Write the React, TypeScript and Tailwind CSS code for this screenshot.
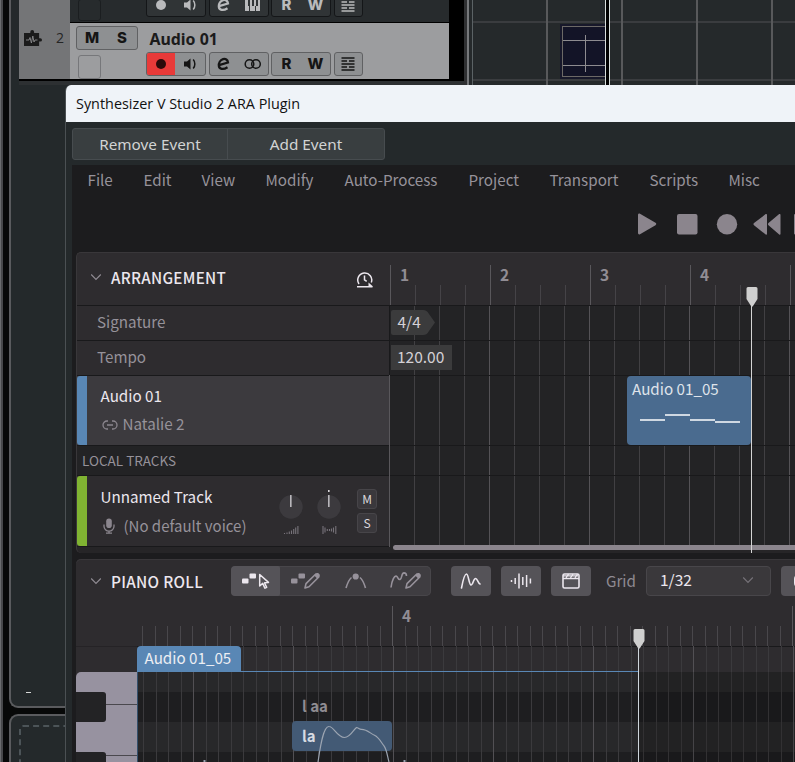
import type { ReactNode } from "react";

const menuItems = [
  { label: "File", width: "w-[56px]" },
  { label: "Edit", width: "w-[58px]" },
  { label: "View", width: "w-[64px]" },
  { label: "Modify", width: "w-[79px]" },
  { label: "Auto-Process", width: "w-[124px]" },
  { label: "Project", width: "w-[81px]" },
  { label: "Transport", width: "w-[100px]" },
  { label: "Scripts", width: "w-[79px]" },
  { label: "Misc", width: "w-[60px]" },
];

const range = (n: number) => Array.from({ length: n }, (_, i) => i);

/* ---------- host track list ---------- */

function HostGroup({ children, dark, className }: { children: ReactNode; dark?: boolean; className: string }) {
  return (
    <div
      className={`flex h-6 shrink-0 items-center rounded-[3px] border ${
        dark ? "border-[#141618] bg-[#303436] text-[#b9babc]" : "border-[#606163] bg-[#8e9092] text-[#151515]"
      } ${className}`}
    >
      {children}
    </div>
  );
}

function SpeakerIcon() {
  return (
    <svg viewBox="0 0 16 16" className="h-4 w-4">
      <path d="M2 5.500h3L8.500 2.500v11L5 10.500H2z" fill="currentColor" />
      <path d="M11.200 3.500c2.200 2.500 2.200 6.500 0 9" fill="none" stroke="currentColor" strokeWidth="1.500" />
    </svg>
  );
}

function EditIcon() {
  return (
    <svg viewBox="0 0 16 16" className="h-4 w-4">
      <path
        d="M3 9.200 12 6.500C11.700 3.700 9.500 2.300 7.100 3.100 4.200 4.100 2.500 7.200 2.900 10c.4 3 4.100 4.100 8.600 1.200"
        fill="none"
        stroke="currentColor"
        strokeWidth="2.300"
      />
    </svg>
  );
}

function LanesIcon() {
  return (
    <svg viewBox="0 0 14 14" className="h-3.5 w-3.5" stroke="currentColor" strokeWidth="1.500">
      <path d="M.5 1h13M.5 4h5.500M8 4h5.500M.5 7h13M.5 10h5.500M8 10h5.500M.5 13h13" />
    </svg>
  );
}

function HostButtons({ dark }: { dark?: boolean }) {
  return (
    <div className="flex gap-[2.500px]">
      <HostGroup dark={dark} className="w-[60px] overflow-hidden">
        <span className={`flex h-full w-[28px] items-center justify-center ${dark ? "" : "bg-[#e83a39] text-[#2c0a0a]"}`}>
          <span className="h-[10px] w-[10px] rounded-full bg-current" />
        </span>
        <span className="flex flex-1 justify-center">
          <SpeakerIcon />
        </span>
      </HostGroup>
      <HostGroup dark={dark} className="w-[60px]">
        <span className="flex flex-1 justify-center">
          <EditIcon />
        </span>
        <span className="flex flex-1 justify-center">
          {dark ? (
            <svg viewBox="0 0 16 16" className="h-4 w-4" fill="currentColor">
              <path d="M0 0h3v9h1v5H0zM5 0h2v9h2V0h2v9h-1v5H5zM13 0h2v14h-4V9h2z" />
            </svg>
          ) : (
            <svg viewBox="0 0 18 12" className="h-3 w-[18px]" fill="none" stroke="currentColor" strokeWidth="1.500">
              <circle cx="5.500" cy="6" r="4.300" />
              <circle cx="12" cy="6" r="4.300" />
            </svg>
          )}
        </span>
      </HostGroup>
      <HostGroup dark={dark} className="w-[60px] font-['Inter'] text-[15px] leading-4 font-extrabold">
        <span className="flex-1 text-center">R</span>
        <span className="flex-1 text-center">W</span>
      </HostGroup>
      <HostGroup dark={dark} className="w-[29px] justify-center">
        <LanesIcon />
      </HostGroup>
    </div>
  );
}

function TrackList() {
  return (
    <div className="flex h-[85px] w-[445px] shrink-0 flex-col bg-[#2d3032]">
      <div className="flex h-[81px] border-b-2 border-black bg-black">
        <div className="flex w-[51px] items-start gap-[13px] bg-[#747577] pt-[30px] pl-[5px]">
          <svg viewBox="0 0 19 17" className="h-[17px] w-[19px] shrink-0">
            <path d="M0 3h6.300V1.900a1.900 1.900 0 0 1 3.800 0V3h5v5.200h1.200a1.700 1.700 0 0 1 0 3.400h-1.200V16H0z" fill="#1b1b1b" />
            <path d="M2 10H5l1-2.500 1.400 5.500L8.800 6l1.200 6 1-2h2.500" fill="none" stroke="#8a8a8c" strokeWidth=".9" />
          </svg>
          <span className="font-['Open_Sans'] text-sm leading-4 text-[#252525]">2</span>
        </div>
        <div className="w-[379px]">
          <div className="flex h-[22px] items-end bg-[#272b2d]">
            <span className="mb-px ml-2 h-[22px] w-[23px] shrink-0 rounded-[3px] border border-[#1b1e20]" />
            <div className="mb-[5px] ml-[45px]">
              <HostButtons dark />
            </div>
          </div>
          <div className="mt-px flex h-[56px] bg-[#9c9d9f]">
            <div className="w-[76px] pt-[3px] pl-1.5">
              <HostGroup className="w-[62px] font-['Inter'] text-[15px] leading-4 font-extrabold">
                <span className="flex-1 text-center">M</span>
                <span className="flex-1 text-center">S</span>
              </HostGroup>
              <div className="mt-[5px] ml-0.5 h-6 w-[23px] rounded-[3px] border border-[#76777a]" />
            </div>
            <div>
              <div className="h-[29px] pt-[4px] pl-[3.500px] font-['Noto_Sans'] text-[15.900px] leading-[25px] font-bold text-[#1b1b1b]">
                Audio 01
              </div>
              <HostButtons />
            </div>
          </div>
        </div>
      </div>
    </div>
  );
}

function HostTimeline() {
  return (
    <div className="relative h-[85px] flex-1 overflow-hidden border-l border-[#5b6265] bg-[#25292b]">
      <div className="h-[23px] border-b-2 border-[#3a3c3f]" />
      <div className="h-[58px] border-b-2 border-[#3a3c3f]" />
      <div className="absolute inset-y-0 left-[73px] flex">
        {range(4).map((i) => (
          <div key={i} className="w-[75px] border-l-2 border-[#58595b]" />
        ))}
      </div>
      <div className="absolute top-6 left-[87px] h-[55px] w-[50px] bg-[#17182a] p-0.5">
        <div className="relative h-[51px] border border-[#6c6966] bg-[#131427]">
          <div className="absolute inset-x-0 top-[13px] h-[26px] border-y border-[#8e8c90]" />
          <div className="absolute top-2 left-[22px] h-[37px] w-px bg-[#8e8c90]" />
        </div>
      </div>
      <div className="absolute inset-y-0 left-[132px] w-[5px] border-x border-[#d7dedc] bg-black" />
    </div>
  );
}

/* ---------- icons of the plugin ---------- */

function Chevron({ className }: { className?: string }) {
  return (
    <svg viewBox="0 0 12 8" className={`h-2 w-3 shrink-0 ${className ?? ""}`} fill="none" stroke="#8f8a92" strokeWidth="1.200">
      <path d="M1.200 1.500 6 6.300l4.800-4.800" />
    </svg>
  );
}

function ClockIcon() {
  return (
    <svg viewBox="0 0 18 17" className="h-[17px] w-[18px]" fill="none" stroke="#ece7ee" strokeWidth="1.500">
      <path d="M3 13A7 7 0 1 1 15.300 11.500M8.500 4.500v4.300l2.200 1.600M1 15.800h15.500" />
      <path d="M12.500 11.500V15.500H17z" fill="#ece7ee" stroke="none" />
    </svg>
  );
}

function PlayheadCap({ className }: { className: string }) {
  return (
    <svg viewBox="0 0 12 20" className={`absolute h-5 w-3 ${className}`}>
      <path d="M2 0h8a1.500 1.500 0 0 1 1.500 1.500V12L6.700 19.500H5.300L.5 12V1.500A1.500 1.500 0 0 1 2 0z" fill="#cfcfcf" />
    </svg>
  );
}

function Pencil({ x }: { x: number }) {
  return (
    <g transform={`translate(${x} 0)`}>
      <path d="M1 16 2 11.600 11.800 2l3 3L5 14.800z" fill="none" stroke="currentColor" strokeWidth="1.600" strokeLinejoin="round" />
      <path d="m10.300 3.500 1.800-2c1.700-1.500 4.900 1.200 3.300 3.200l-2.100 2z" fill="currentColor" />
    </g>
  );
}

function ToolPointer() {
  return (
    <svg viewBox="0 0 28 18" className="h-[18px] w-7" fill="#ece7ee">
      <rect x="0" y="6.500" width="6.500" height="5" rx="1" />
      <rect x="7.500" y="1.500" width="6.500" height="5" rx="1" />
      <path d="M17.700 2.500V14l3-2.600 2.200 4.800 1.800-.9-2.200-4.500 4-.4z" fill="none" stroke="#ece7ee" strokeWidth="1.500" strokeLinejoin="round" />
    </svg>
  );
}

function ToolPencil() {
  return (
    <svg viewBox="0 0 30 18" className="h-[18px] w-[30px] text-[#97929b]" fill="currentColor">
      <rect x="0" y="6.500" width="6.500" height="5" rx="1" />
      <rect x="7.500" y="1.500" width="6.500" height="5" rx="1" />
      <Pencil x={13} />
    </svg>
  );
}

function ToolCurve() {
  return (
    <svg viewBox="0 0 22 18" className="h-[18px] w-[22px] text-[#97929b]" fill="none" stroke="currentColor" strokeWidth="1.600">
      <path d="M1 16C2.500 11 4 7.500 6.500 5.500M15 5.500c2.500 2 4 5.500 5.500 10.500" />
      <circle cx="10.700" cy="4.500" r="3.100" fill="currentColor" stroke="none" />
    </svg>
  );
}

function ToolFreehand() {
  return (
    <svg viewBox="0 0 32 18" className="h-[18px] w-8 text-[#97929b]" fill="none">
      <path d="M1 15.500C2 8 4.500 3.300 6.500 4.300 8.500 5.500 8 8 10 7.500 12.500 6.500 11 1 14 .9c2 0 2.500 1.500 2.500 3" stroke="currentColor" strokeWidth="1.600" />
      <Pencil x={15} />
    </svg>
  );
}

function MicIcon() {
  return (
    <svg viewBox="0 0 12 16" className="h-4 w-3" fill="none" stroke="#8b868e" strokeWidth="1.300">
      <rect x="3.200" y=".5" width="5.600" height="9.500" rx="2.800" fill="#8b868e" stroke="none" />
      <path d="M1 6.500v1.700a5 5 0 0 0 10 0V6.500M6 13v2M3 15.200h6" />
    </svg>
  );
}

function Knob({ pan }: { pan?: boolean }) {
  return (
    <div className="flex w-6 flex-col items-center">
      <svg viewBox="0 0 24 32" className="h-8 w-6">
        <circle cx="12" cy="20" r="11.700" fill="#3c3a3e" />
        {pan && <rect x="11" y="3" width="1.600" height="2" fill="#d8d5da" />}
        <rect x="11.200" y="8" width="1.300" height="12" fill="#d8d5da" />
      </svg>
      <svg viewBox="0 0 16 10" className="mt-[6px] h-2.5 w-4" stroke="#77737a" strokeWidth="1.100">
        {pan ? (
          <path d="M2 1v8M4 2.500v5M6.300 4v2M8.500 4v2M10.500 3.500v3M12.500 2.500v5M14.800 1v8" />
        ) : (
          <path d="M1.500 8v1M4 7.500V9M6.300 6.500V9M8.500 5.500V9M10.700 4v5M12.700 2.500V9M14.900 1v8" />
        )}
      </svg>
    </div>
  );
}

function SmallButton({ children }: { children: ReactNode }) {
  return (
    <div className="flex h-5 w-5 items-center justify-center rounded-[3px] border border-[#474549] bg-[#3a383c] pb-px text-[12px] text-[#dcd9de]">
      {children}
    </div>
  );
}

function SquareButton({ children }: { children: ReactNode }) {
  return <div className="flex h-[30px] w-10 shrink-0 items-center justify-center rounded-[4px] bg-[#555358]">{children}</div>;
}

/* ---------- arrangement ---------- */

function Transport() {
  return (
    <div className="flex h-[58px] items-center pb-px pl-[562px]">
      <svg viewBox="0 0 158 22" className="h-[22px] w-[158px] shrink-0" fill="#8b858d">
        <path d="M0 2C0 .8 1 .2 2 .8l15.500 9c1 .6 1 1.800 0 2.400L2 21.200C1 21.800 0 21.200 0 20z" />
        <rect x="39" y="1" width="20.500" height="20.500" rx="2" />
        <circle cx="89" cy="11.200" r="10.200" />
        <path d="M129 1.700v19.200c0 .8-.7 1-1.300.6L116 12.200c-.7-.6-.7-1.500 0-2.100l11.700-9c.6-.4 1.300-.2 1.300.6zM142.500 1.700v19.200c0 .8-.7 1-1.300.6L130.500 12.200c-.7-.6-.7-1.500 0-2.100l10.700-9c.6-.4 1.300-.2 1.300.6z" />
        <rect x="156" y="1" width="6" height="20.500" rx="1" />
      </svg>
    </div>
  );
}

function TrackHeaders() {
  return (
    <div className="relative flex w-[313px] shrink-0 flex-col text-[15.200px] text-[#96929a]">
      <div className="flex h-[52px] items-center pb-1 pl-[13px]">
        <Chevron />
        <span className="ml-[9px] flex-1 font-medium tracking-[0.300px] text-[#ece7ee]">ARRANGEMENT</span>
        <span className="mt-1 mr-4">
          <ClockIcon />
        </span>
      </div>
      <div className="flex h-[35px] items-center border-t border-[#19191b] pb-[3px] pl-5">Signature</div>
      <div className="flex h-[35px] items-center border-t border-[#19191b] pb-[3px] pl-5">Tempo</div>
      <div className="flex h-[70px] border-t border-[#19191b] bg-[#3c3a3e]">
        <div className="w-[10px] rounded-l-[3px] bg-[#5987b5]" />
        <div className="flex flex-col pt-[5px] pl-[13.500px] leading-[28px]">
          <span className="text-[#ece7ee]">Audio 01</span>
          <span className="flex items-center gap-1.5">
            <svg viewBox="0 0 16 10" className="mt-1 ml-px h-2.5 w-4" fill="none" stroke="#8b868e" strokeWidth="1.300">
              <path d="M6 1H5a4 4 0 0 0 0 8h1M10 1h1a4 4 0 0 1 0 8h-1M5 5h6" />
            </svg>
            <span className="-ml-px">Natalie 2</span>
          </span>
        </div>
      </div>
      <div className="flex h-[30px] items-center border-t border-[#19191b] bg-[#232325] pl-[5px] text-[13.500px]">LOCAL TRACKS</div>
      <div className="flex h-[71px] border-t border-[#19191b]">
        <div className="w-[10px] rounded-l-[3px] bg-[#80b332]" />
        <div className="flex w-[192px] flex-col pt-[6px] pl-[13.500px] leading-[29px]">
          <span className="text-[#ece7ee]">Unnamed Track</span>
          <span className="flex items-center gap-[9px] text-[15px]">
            <span className="ml-0.5">
              <MicIcon />
            </span>
            (No default voice)
          </span>
        </div>
        <div className="flex gap-[14px] pt-[11px]">
          <Knob />
          <Knob pan />
        </div>
        <div className="ml-4 flex flex-col gap-1 pt-[13px]">
          <SmallButton>M</SmallButton>
          <SmallButton>S</SmallButton>
        </div>
      </div>
      <div className="flex-1 rounded-bl-[5px] border-t border-[#19191b] bg-[#262527]" />
      <div className="absolute top-[122px] right-0 bottom-[6px] w-px bg-[#59575b]" />
      <div className="absolute top-[52px] right-0 h-[70px] w-px bg-[#19191b]" />
    </div>
  );
}

function ArrangementLanes() {
  return (
    <div className="relative flex-1 overflow-hidden">
      <div className="flex h-[52px] items-end">
        {range(17).map((i) =>
          i % 4 === 0 ? (
            <div key={i} className="flex h-10 w-[25px] shrink-0 items-start border-l border-[#59575b] pl-[9px] text-[15.500px] leading-[18px] font-bold text-[#918d94]">
              {i < 16 && i / 4 + 1}
            </div>
          ) : (
            <div key={i} className="h-5 w-[25px] shrink-0 border-l border-[#454347]" />
          ),
        )}
      </div>
      <div className="relative h-[248px] bg-[#232325]">
        <div className="absolute inset-y-0 -left-px flex">
          {range(17).map((i) => (
            <div key={i} className={`w-[25px] shrink-0 border-l ${i === 0 ? "border-transparent" : i % 4 === 0 ? "border-[#545256]" : "border-[#414043]"}`} />
          ))}
        </div>
        <div className="relative">
          <div className="flex h-[35px] items-center border-t border-[#19191b] pb-0.5 text-[15.500px] text-[#d4d1d6]">
            <svg viewBox="0 0 45 25" className="absolute top-[5px] left-px h-[25px] w-[45px]">
              <path d="M0 2a2 2 0 0 1 2-2h30c3 0 4 1 6 4l6 8.500-6 8.500c-2 3-3 4-6 4H2a2 2 0 0 1-2-2z" fill="#3b3b3c" />
            </svg>
            <span className="relative pl-[7.500px]">4/4</span>
          </div>
          <div className="flex h-[35px] items-center border-t border-[#19191b] pb-px pl-px text-[15.500px] text-[#d4d1d6]">
            <span className="flex h-[25px] w-[61px] items-center bg-[#3b3b3c] pb-px pl-1.5">120.00</span>
          </div>
          <div className="h-[70px] border-t border-[#19191b] pl-[237px]">
            <div className="relative h-[69px] w-[124px] rounded-[4px] bg-[#4a6b8f] pt-px pl-[5px] text-[15.200px] leading-[22px] text-[#dfe3ea]">
              Audio 01_05
              <div className="mt-[15px] ml-2 flex">
                <span className="mt-[5px] h-0.5 w-[25px] bg-[#cfd8e2]" />
                <span className="h-0.5 w-[25px] bg-[#cfd8e2]" />
                <span className="mt-[5px] h-0.5 w-[25px] bg-[#cfd8e2]" />
                <span className="mt-[7px] h-0.5 w-[25px] bg-[#cfd8e2]" />
              </div>
            </div>
          </div>
          <div className="h-[30px] border-t border-[#19191b]" />
          <div className="h-[70px] border-t border-[#19191b]" />
          <div className="ml-[3px] h-[5px] rounded-l-full bg-[#8b858d]" />
          <div className="h-[3px] bg-[#262527]" />
        </div>
      </div>
      <div className="absolute top-[50px] bottom-0 left-[361px] w-px bg-[#d4d4d4]" />
      <PlayheadCap className="top-[34px] left-[355.500px]" />
    </div>
  );
}

/* ---------- piano roll ---------- */

function PianoToolbar() {
  return (
    <div className="flex h-[36px] items-end pl-[14px]">
      <div className="flex h-[30px] w-[141px] shrink-0 items-center">
        <Chevron />
        <span className="ml-[9px] text-[15.300px] font-medium tracking-[0.300px] text-[#ece7ee]">PIANO ROLL</span>
      </div>
      <div className="flex h-[30px] w-[200px] shrink-0 rounded-[5px] bg-[#3f3d41] ring-1 ring-[#48464a] ring-inset">
        <div className="flex w-[49px] items-center justify-center rounded-l-[4px] rounded-r-[2px] bg-[#555358]">
          <ToolPointer />
        </div>
        <div className="flex w-[51px] items-center justify-center">
          <ToolPencil />
        </div>
        <div className="flex w-[50px] items-center justify-center">
          <ToolCurve />
        </div>
        <div className="flex w-[50px] items-center justify-center">
          <ToolFreehand />
        </div>
      </div>
      <div className="ml-5 flex shrink-0 gap-2.5">
        <SquareButton>
          <svg viewBox="0 0 22 18" className="h-[18px] w-[22px]" fill="none" stroke="#ece7ee" strokeWidth="1.600" strokeLinecap="round">
            <path d="M1.500 16C3 8 4.500 2 6.500 2S9 13 11 13s2.500-6.500 4.500-6.500 2.500 5 4.500 5.500" />
          </svg>
        </SquareButton>
        <SquareButton>
          <svg viewBox="0 0 22 18" className="h-[18px] w-[22px]" fill="none" stroke="#ece7ee" strokeWidth="1.500">
            <path d="M1.500 8v2M5.200 6v6M9 1.500v15M12.800 5v8M16.600 3v12M20.400 6.500v5" />
          </svg>
        </SquareButton>
        <SquareButton>
          <svg viewBox="0 0 18 16" className="h-4 w-[18px]" fill="none" stroke="#ece7ee" strokeWidth="1.600">
            <rect x="1" y="1" width="16" height="14" rx="1.500" />
            <path d="M1 5.500h16" />
            <path d="m4 5 2.500-4M8.500 5 11 1M13 5l2.500-4M1 2.800h15" strokeWidth="1.300" />
          </svg>
        </SquareButton>
      </div>
      <div className="flex h-[30px] w-[55px] shrink-0 items-center pb-px pl-[15px] text-[15.200px] text-[#8f8a92]">Grid</div>
      <div className="flex h-[30px] w-[125px] shrink-0 items-center justify-between rounded-[4px] border border-[#48464a] bg-[#3a383b] pr-4 pb-0.5 pl-[13px] text-[15.500px] text-[#ece7ee]">
        1/32
        <Chevron className="opacity-70" />
      </div>
      <div className="ml-2.5 flex h-[30px] w-10 shrink-0 items-center rounded-[4px] bg-[#555358] pl-[12.500px]">
        <span className="h-3 w-3 shrink-0 rounded-[4px] bg-[#ece7ee]" />
      </div>
    </div>
  );
}

function PianoRuler() {
  return (
    <div className="flex h-[50px] items-end overflow-hidden pl-[66px]">
      {range(53).map((i) =>
        i % 32 === 20 ? (
          <div key={i} className="h-10 w-[12.500px] shrink-0 border-l border-[#59575b] pl-[9px] text-[15.500px] leading-[18px] font-bold whitespace-nowrap text-[#918d94]">
            {i === 20 ? "4" : ""}
          </div>
        ) : (
          <div key={i} className="h-5 w-[12.500px] shrink-0 border-l border-[#49474b]" />
        ),
      )}
    </div>
  );
}

function PianoKeys() {
  return (
    <div className="relative h-[90px] w-[61px] overflow-hidden rounded-tl-[5px] bg-[#9792a0]">
      <div className="absolute top-8 right-0 h-px w-[31px] bg-[#4a484e]" />
      <div className="absolute top-[83px] right-0 h-px w-[31px] bg-[#4a484e]" />
      <div className="absolute top-5 left-0 h-[30px] w-[30px] rounded-r-[3px] bg-[#232325]" />
      <div className="absolute top-20 left-0 h-[30px] w-[30px] rounded-r-[3px] bg-[#232325]" />
    </div>
  );
}

function PianoGrid() {
  return (
    <div className="relative flex h-[117px] overflow-hidden">
      <div className="w-[61px] shrink-0 border-t border-[#252326] pt-[25px]">
        <PianoKeys />
      </div>
      <div className="flex-1">
        <div className="h-[26px] border-t border-[#19191b]" />
        <div className="h-5 bg-[#28282a]" />
        <div className="h-[30px] bg-[#1e1e20]" />
        <div className="h-[30px] bg-[#28282a]" />
        <div className="h-[30px] bg-[#1e1e20]" />
      </div>
      <div className="absolute inset-y-0 left-[67px] flex">
        {range(53).map((i) => (
          <div key={i} className={`w-[12.500px] shrink-0 border-l ${i % 8 === 4 ? "border-[#525054]" : "border-[#3b3a3d]"}`} />
        ))}
      </div>
      <div className="absolute top-[26px] right-0 bottom-0 left-[562px] bg-black/15" />
      <div className="absolute top-[25px] left-[61px] h-px w-[501px] bg-[#5987b5]" />
      <div className="absolute top-[26px] bottom-0 left-[61px] w-px bg-[#34506c]" />
      <div className="absolute top-0 left-[61px] h-[26px] w-[104px] rounded-t-[4px] bg-[#5987b5] pl-[7.500px] text-[15.200px] leading-[22px] text-[#eceef3]">
        Audio 01_05
      </div>
      <div className="absolute top-[50px] left-[226px] text-[15px] leading-5 font-bold text-[#8f8c92]">l aa</div>
      <div className="absolute top-[75px] left-[216px] h-[30px] w-[100px] rounded-[4px] bg-[#435a75] pl-2.5 text-[15px] leading-[30px] font-bold text-[#d6dbe2]">
        la
      </div>
      <svg viewBox="0 0 400 116" className="absolute top-0 left-0 h-[116px] w-[400px]" fill="none" stroke="#9ba4b1" strokeWidth="1.200">
        <path d="M242 116C244 103 247 80 253 80.500c5 0 8 11 15.500 11 6 0 9-8 12-10 2 .3 3 2 5 1.800 6 0 9 4.500 13 6 5 2.500 7 8 9.500 10.500C311 104 311.500 111 313 116" />
        <path d="M128.500 114v2M328.500 114v2" strokeWidth="2" />
      </svg>
    </div>
  );
}

function PianoRoll() {
  return (
    <div className="relative mt-[6px] h-[203px] overflow-hidden rounded-tl-[5px] bg-[#2e2c2f] shadow-[inset_0_1px_0_#39373a]">
      <div className="pt-px">
        <PianoToolbar />
      </div>
      <PianoRuler />
      <PianoGrid />
      <div className="absolute top-[86px] bottom-0 left-[562px] w-px bg-[#cfd6dc]" />
      <PlayheadCap className="top-[69.500px] left-[556.500px]" />
    </div>
  );
}

function PluginWindow() {
  return (
    <div className="flex h-[677px] w-[730px] shrink-0 flex-col overflow-hidden rounded-tl-[6px] border-l border-[#4b5053] bg-[#24292b]">
      <div className="flex h-[37px] shrink-0 items-center bg-[#eff3f8] pl-2.5 font-['Open_Sans'] text-[14.400px] text-[#111111]">
        <span className="whitespace-nowrap">Synthesizer V Studio 2 ARA Plugin</span>
      </div>
      <div className="flex h-[43px] shrink-0 pt-1.5 pl-1.5 font-['Noto_Sans'] text-[15.300px] text-[#d2d4d4]">
        <div className="flex h-8 w-[313px] rounded-[3px] border border-[#474c4f] bg-[#393e40]">
          <div className="flex w-[155px] items-center justify-center border-r border-[#474c4f]">Remove Event</div>
          <div className="flex flex-1 items-center justify-center">Add Event</div>
        </div>
      </div>
      <div className="ml-1.5 flex-1 bg-[#1c1c1e] pl-1 font-['Noto_Sans_CJK_SC','Noto_Sans',sans-serif]">
        <div className="flex h-[30px] items-center pb-px pl-[11.500px] text-[15.200px] text-[#96929a]">
          {menuItems.map((item) => (
            <span key={item.label} className={`shrink-0 whitespace-nowrap ${item.width}`}>
              {item.label}
            </span>
          ))}
        </div>
        <Transport />
        <div className="mt-[-1px] flex h-[301px] overflow-hidden rounded-l-[5px] border-t border-l border-[#39373a] bg-[#2e2c2f]">
          <TrackHeaders />
          <ArrangementLanes />
        </div>
        <PianoRoll />
      </div>
    </div>
  );
}

function MixerEdge() {
  return (
    <div className="flex h-[677px] w-[56px] shrink-0 flex-col overflow-hidden bg-[#070808]">
      <div className="flex h-[623px] w-[70px] shrink-0 items-end rounded-bl-[9px] border-b-2 border-l-2 border-[#5a5b5e] bg-[#24292b] pb-[13px] pl-[15px]">
        <span className="h-px w-[5px] bg-[#d7d8d8]" />
      </div>
      <div className="mt-1.5 h-[60px] w-[70px] shrink-0 rounded-tl-[9px] border-t-2 border-l-2 border-[#5a5b5e] bg-[#24292b] pt-[9px] pl-2">
        <div className="h-14 rounded-tl-[4px] border-2 border-dashed border-[#4c5458]" />
      </div>
    </div>
  );
}

export default function App() {
  return (
    <div className="flex h-[762px] w-[795px] overflow-hidden bg-[#24292b]">
      <div className="flex w-[9px] shrink-0 bg-[#070808]">
        <div className="w-[3px] border-l border-[#6a6b6e] bg-[#47484b]" />
      </div>
      <div className="flex w-[786px] shrink-0 flex-col">
        <div className="flex h-[85px] shrink-0">
          <div className="w-[10px] shrink-0 border-l-2 border-[#5a5b5e]" />
          <TrackList />
          <div className="w-[8px] shrink-0 border-x-[3px] border-l-[#2f3032] border-r-[#25292b] bg-[#77797c]" />
          <HostTimeline />
        </div>
        <div className="flex">
          <MixerEdge />
          <PluginWindow />
        </div>
      </div>
    </div>
  );
}
